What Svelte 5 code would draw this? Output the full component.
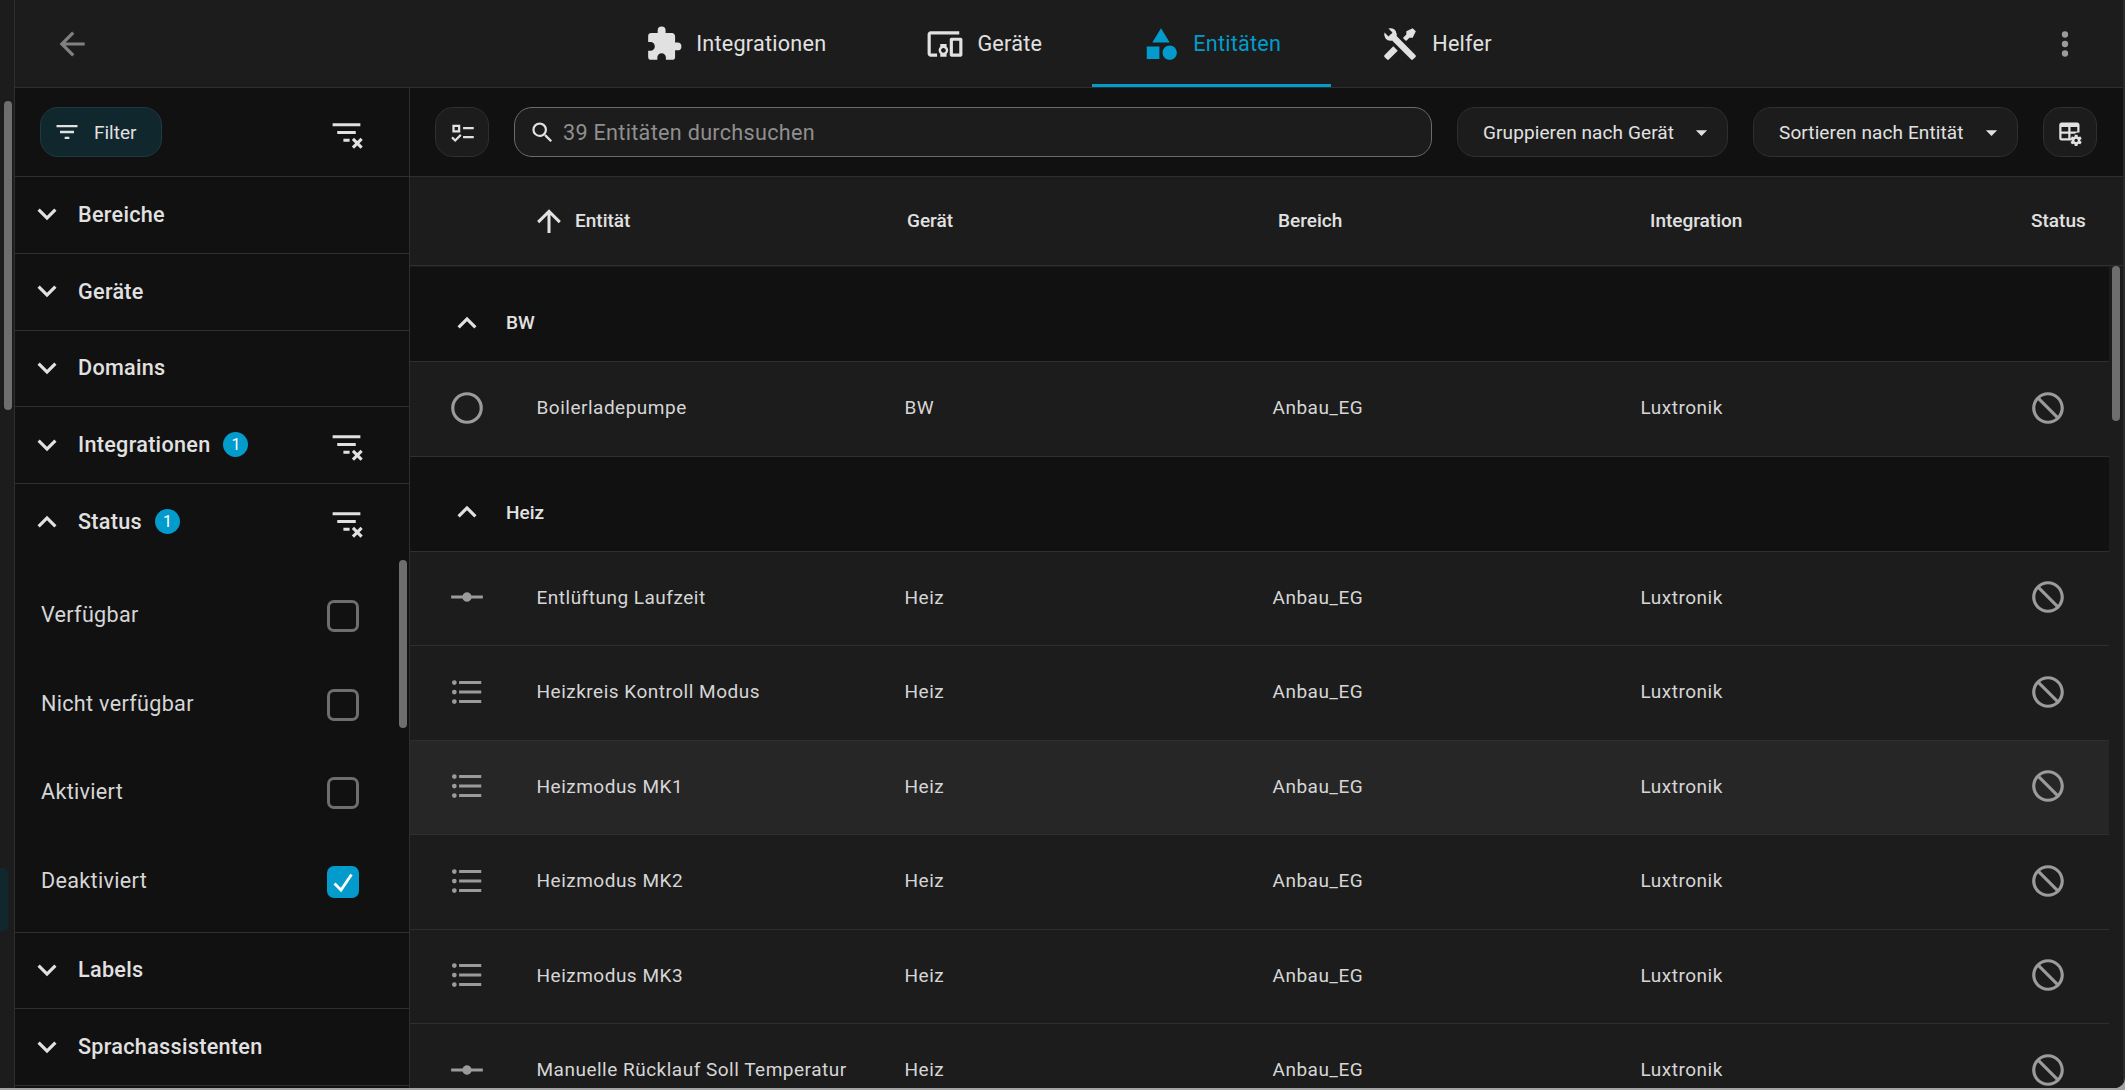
<script lang="ts">
  const P = {
    back: 'M20,11V13H8L13.5,18.5L12.08,19.92L4.16,12L12.08,4.08L13.5,5.5L8,11H20Z',
    puzzle: 'M20.5,11H19V7C19,5.89 18.1,5 17,5H13V3.5A2.5,2.5 0 0,0 10.5,1A2.5,2.5 0 0,0 8,3.5V5H4A2,2 0 0,0 2,7V10.8H3.5C5,10.8 6.2,12 6.2,13.5C6.2,15 5,16.2 3.5,16.2H2V20A2,2 0 0,0 4,22H7.8V20.5C7.8,19 9,17.8 10.5,17.8C12,17.8 13.2,19 13.2,20.5V22H17A2,2 0 0,0 19,20V16H20.5A2.5,2.5 0 0,0 23,13.5A2.5,2.5 0 0,0 20.5,11Z',
    devices: 'M3 6H21V4H3C1.9 4 1 4.9 1 6V18C1 19.1 1.9 20 3 20H7V18H3V6M13 12H9V13.78C8.39 14.33 8 15.11 8 16C8 16.89 8.39 17.67 9 18.22V20H13V18.22C13.61 17.67 14 16.88 14 16S13.61 14.33 13 13.78V12M11 17.5C10.17 17.5 9.5 16.83 9.5 16S10.17 14.5 11 14.5 12.5 15.17 12.5 16 11.83 17.5 11 17.5M22 8H16C15.5 8 15 8.5 15 9V19C15 19.5 15.5 20 16 20H22C22.5 20 23 19.5 23 19V9C23 8.5 22.5 8 22 8M21 18H17V10H21V18Z',
    shape: 'M11,13.5V21.5H3V13.5H11M12,2L17.5,11H6.5L12,2M17.5,13C20,13 22,15 22,17.5C22,20 20,22 17.5,22C15,22 13,20 13,17.5C13,15 15,13 17.5,13Z',
    tools: 'M21.71 20.29L20.29 21.71A1 1 0 0 1 18.88 21.71L7 9.85A3.81 3.81 0 0 1 6 10A4 4 0 0 1 2.22 4.7L4.76 7.24L5.29 6.71L6.71 5.29L7.24 4.76L4.7 2.22A4 4 0 0 1 10 6A3.81 3.81 0 0 1 9.85 7L21.71 18.88A1 1 0 0 1 21.71 20.29M2.29 18.88A1 1 0 0 0 2.29 20.29L3.71 21.71A1 1 0 0 0 5.12 21.71L10.59 16.25L7.76 13.42M20 2L16 4V6L13.83 8.17L15.83 10.17L18 8H20L22 4Z',
    dots: 'M12,16A2,2 0 0,1 14,18A2,2 0 0,1 12,20A2,2 0 0,1 10,18A2,2 0 0,1 12,16M12,10A2,2 0 0,1 14,12A2,2 0 0,1 12,14A2,2 0 0,1 10,12A2,2 0 0,1 12,10M12,4A2,2 0 0,1 14,6A2,2 0 0,1 12,8A2,2 0 0,1 10,6A2,2 0 0,1 12,4Z',
    filter: 'M6,13H18V11H6M3,6V8H21V6M10,18H14V16H10V18Z',
    clear: 'M21 8H3V6H21V8M18 13H6V11H18V13M14 16H10V18H14V16M21.12 15.46L19 17.59L16.88 15.46L15.46 16.88L17.59 19L15.46 21.12L16.88 22.54L19 20.41L21.12 22.54L22.54 21.12L20.41 19L22.54 16.88Z',
    down: 'M7.41,8.58L12,13.17L16.59,8.58L18,10L12,16L6,10L7.41,8.58Z',
    up: 'M7.41,15.41L12,10.83L16.59,15.41L18,14L12,8L6,14L7.41,15.41Z',
    arrowUp: 'M13,20H11V8L5.5,13.5L4.08,12.08L12,4.16L19.92,12.08L18.5,13.5L13,8V20Z',
    search: 'M9.5,3A6.5,6.5 0 0,1 16,9.5C16,11.11 15.41,12.59 14.44,13.73L14.71,14H15.5L20.5,19L19,20.5L14,15.5V14.71L13.73,14.44C12.59,15.41 11.11,16 9.5,16A6.5,6.5 0 0,1 3,9.5A6.5,6.5 0 0,1 9.5,3M9.5,5C7,5 5,7 5,9.5C5,12 7,14 9.5,14C12,14 14,12 14,9.5C14,7 12,5 9.5,5Z',
    menuDown: 'M7,10L12,15L17,10H7Z',
    select: 'M3 5H10V12H3V5M5 7V10H8V7H5M12.5 7H22V9H12.5V7M12.5 15H22V17H12.5V15M2 17L3.4 15.6L5.5 17.7L9.8 13.4L11.2 14.8L5.5 20.5L2 17Z',
    tableCog: 'M4 3H18C19.11 3 20 3.9 20 5V12.08C18.45 11.82 16.92 12.18 15.68 13H12V17H13.08C12.97 17.68 12.97 18.35 13.08 19H4C2.9 19 2 18.11 2 17V5C2 3.9 2.9 3 4 3M4 7V11H10V7H4M12 7V11H18V7H12M4 13V17H10V13H4M18 14C18.14 14 18.26 14.09 18.28 14.22L18.47 15.5C18.76 15.63 19.03 15.8 19.28 16L20.5 15.5C20.63 15.5 20.76 15.5 20.83 15.63L21.83 17.36C21.89 17.47 21.87 17.6 21.77 17.68L20.71 18.5C20.75 18.83 20.75 19.17 20.71 19.5L21.77 20.32C21.87 20.4 21.89 20.53 21.83 20.64L20.83 22.37C20.76 22.5 20.63 22.5 20.5 22.5L19.28 22C19.03 22.2 18.76 22.37 18.47 22.5L18.28 23.78C18.26 23.91 18.14 24 18 24H16C15.86 24 15.74 23.91 15.72 23.78L15.53 22.5C15.24 22.37 14.97 22.2 14.72 22L13.5 22.5C13.37 22.5 13.24 22.5 13.17 22.37L12.17 20.64C12.11 20.53 12.13 20.4 12.23 20.32L13.29 19.5C13.25 19.17 13.25 18.83 13.29 18.5L12.23 17.68C12.13 17.6 12.11 17.47 12.17 17.36L13.17 15.63C13.24 15.5 13.37 15.5 13.5 15.5L14.72 16C14.97 15.8 15.24 15.63 15.53 15.5L15.72 14.22C15.74 14.09 15.86 14 16 14H18M17 17.5A1.5 1.5 0 0 0 15.5 19A1.5 1.5 0 0 0 17 20.5A1.5 1.5 0 0 0 18.5 19A1.5 1.5 0 0 0 17 17.5Z',
    circle: 'M12,20A8,8 0 0,1 4,12A8,8 0 0,1 12,4A8,8 0 0,1 20,12A8,8 0 0,1 12,20M12,2A10,10 0 0,0 2,12A10,10 0 0,0 12,22A10,10 0 0,0 22,12A10,10 0 0,0 12,2Z',
    vertex: 'M2 11H9.17C9.58 9.83 10.69 9 12 9S14.42 9.83 14.83 11H22V13H14.83C14.42 14.17 13.31 15 12 15S9.58 14.17 9.17 13H2V11Z',
    list: 'M7,5H21V7H7V5M7,13V11H21V13H7M4,4.5A1.5,1.5 0 0,1 5.5,6A1.5,1.5 0 0,1 4,7.5A1.5,1.5 0 0,1 2.5,6A1.5,1.5 0 0,1 4,4.5M4,10.5A1.5,1.5 0 0,1 5.5,12A1.5,1.5 0 0,1 4,13.5A1.5,1.5 0 0,1 2.5,12A1.5,1.5 0 0,1 4,10.5M7,19V17H21V19H7M4,16.5A1.5,1.5 0 0,1 5.5,18A1.5,1.5 0 0,1 4,19.5A1.5,1.5 0 0,1 2.5,18A1.5,1.5 0 0,1 4,16.5Z',
    cancel: 'M12 2C17.5 2 22 6.5 22 12S17.5 22 12 22 2 17.5 2 12 6.5 2 12 2M12 4C10.1 4 8.4 4.6 7.1 5.7L18.3 16.9C19.3 15.5 20 13.8 20 12C20 7.6 16.4 4 12 4M16.9 18.3L5.7 7.1C4.6 8.4 4 10.1 4 12C4 16.4 7.6 20 12 20C13.9 20 15.6 19.4 16.9 18.3Z',
  };

  const tabs = [
    { label: 'Integrationen', icon: P.puzzle },
    { label: 'Geräte', icon: P.devices },
    { label: 'Entitäten', icon: P.shape, active: true },
    { label: 'Helfer', icon: P.tools },
  ];

  const statusOptions = [
    { label: 'Verfügbar', checked: false },
    { label: 'Nicht verfügbar', checked: false },
    { label: 'Aktiviert', checked: false },
    { label: 'Deaktiviert', checked: true },
  ];

  const groups = [
    { name: 'BW', rows: [{ name: 'Boilerladepumpe', icon: P.circle }] },
    {
      name: 'Heiz',
      rows: [
        { name: 'Entlüftung Laufzeit', icon: P.vertex },
        { name: 'Heizkreis Kontroll Modus', icon: P.list },
        { name: 'Heizmodus MK1', icon: P.list, hover: true },
        { name: 'Heizmodus MK2', icon: P.list },
        { name: 'Heizmodus MK3', icon: P.list },
        { name: 'Manuelle Rücklauf Soll Temperatur', icon: P.vertex },
      ],
    },
  ];
</script>

{#snippet icon(d: string, cls = '')}
  <svg class="icon {cls}" viewBox="0 0 24 24" aria-hidden="true"><path {d} /></svg>
{/snippet}

{#snippet section(title: string, open = false, count = 0)}
  <div class="section-head">
    {@render icon(open ? P.up : P.down)}
    <span class="section-title">{title}</span>
    {#if count}<span class="badge">{count}</span>{/if}
    {#if count}{@render icon(P.clear, 'clear')}{/if}
  </div>
{/snippet}

<div class="page">
  <aside class="rail">
    <div class="rail-thumb"></div>
    <div class="rail-active"></div>
  </aside>

  <div class="main">
    <header class="topbar">
      <div class="back">{@render icon(P.back)}</div>
      <nav class="tabs">
        {#each tabs as tab}
          <div class="tab" class:active={tab.active}>
            {@render icon(tab.icon)}
            <span>{tab.label}</span>
          </div>
        {/each}
      </nav>
      <div class="more">{@render icon(P.dots)}</div>
    </header>

    <div class="content">
      <section class="pane">
        <div class="filter-top">
          <div class="filter-btn">{@render icon(P.filter)}<span>Filter</span></div>
          {@render icon(P.clear, 'clear')}
        </div>
        {@render section('Bereiche')}
        {@render section('Geräte')}
        {@render section('Domains')}
        {@render section('Integrationen', false, 1)}
        <div class="status-block">
          {@render section('Status', true, 1)}
          <div class="options">
            {#each statusOptions as opt}
              <div class="option">
                <span>{opt.label}</span>
                <span class="box" class:checked={opt.checked}>
                  {#if opt.checked}
                    <svg viewBox="0 0 32 32"><path d="M7.5 17.5L14 24L24.5 8.5" /></svg>
                  {/if}
                </span>
              </div>
            {/each}
          </div>
          <div class="pane-thumb"></div>
        </div>
        {@render section('Labels')}
        {@render section('Sprachassistenten')}
      </section>

      <section class="data">
        <div class="toolbar">
          <div class="square-btn">{@render icon(P.select)}</div>
          <div class="search">{@render icon(P.search)}<span>39 Entitäten durchsuchen</span></div>
          <div class="menu-btn group-by"><span>Gruppieren nach Gerät</span>{@render icon(P.menuDown)}</div>
          <div class="menu-btn sort-by"><span>Sortieren nach Entität</span>{@render icon(P.menuDown)}</div>
          <div class="square-btn">{@render icon(P.tableCog)}</div>
        </div>

        <div class="table-head">
          <div class="th-name">{@render icon(P.arrowUp)}<span>Entität</span></div>
          <span>Gerät</span>
          <span>Bereich</span>
          <span>Integration</span>
          <span>Status</span>
        </div>

        <div class="table-body">
          <div class="table-thumb"></div>
          {#each groups as group}
            <div class="group">
              {@render icon(P.up)}
              <span>{group.name}</span>
            </div>
            {#each group.rows as row}
              <div class="row" class:hover={row.hover}>
                {@render icon(row.icon, 'state')}
                <span class="name">{row.name}</span>
                <span>{group.name}</span>
                <span>Anbau_EG</span>
                <span>Luxtronik</span>
                {@render icon(P.cancel, 'state')}
              </div>
            {/each}
          {/each}
        </div>
      </section>
    </div>
  </div>
</div>

<style>
  :global(body) {
    background: #a3a3a3;
    overflow: hidden;
  }

  .page {
    display: flex;
    height: 1088px;
    box-sizing: border-box;
    overflow: hidden;
    border-right: 2px solid #2b2b2b;
    border-radius: 0 0 10px 0;
    font-family: Roboto, 'Liberation Sans', sans-serif;
    color: #e1e1e1;
    background: #1c1c1c;
  }

  .icon {
    display: block;
    flex: none;
    width: 38px;
    height: 38px;
    fill: currentColor;
  }

  .rail {
    position: relative;
    flex: none;
    width: 14px;
    border-right: 1px solid #2f2f2f;
  }

  .rail-thumb {
    position: absolute;
    left: 4px;
    top: 101px;
    width: 8px;
    height: 309px;
    border-radius: 4px;
    background: #6e6e6e;
  }

  .rail-active {
    position: absolute;
    left: 0;
    top: 868px;
    width: 8px;
    height: 63px;
    border-radius: 0 5px 5px 0;
    background: #10272e;
  }

  .main {
    flex: 1;
    min-width: 0;
    display: flex;
    flex-direction: column;
  }

  .topbar {
    flex: none;
    height: 88px;
    box-sizing: border-box;
    display: flex;
    align-items: center;
    justify-content: space-between;
    padding: 0 39px 0 38px;
    border-bottom: 1px solid #2f2f2f;
  }

  .back {
    color: #808080;
  }

  .more {
    color: #9b9b9b;
  }

  .tabs {
    display: flex;
  }

  .tab {
    display: flex;
    align-items: center;
    gap: 13px;
    padding: 0 50px;
    height: 87px;
    box-sizing: border-box;
    font-size: 21.6px;
    letter-spacing: 0.25px;
    color: #e1e1e1;
  }

  .tab.active {
    color: #039bcb;
    box-shadow: inset 0 -3px 0 #039bcb;
  }

  .content {
    flex: 1;
    min-height: 0;
    display: flex;
    background: #111111;
  }

  .pane {
    flex: none;
    width: 394px;
    border-right: 1px solid #2f2f2f;
  }

  .filter-top {
    height: 89px;
    box-sizing: border-box;
    display: flex;
    align-items: center;
    justify-content: space-between;
    padding: 0 44px 0 25px;
    border-bottom: 1px solid #2f2f2f;
  }

  .filter-btn {
    display: flex;
    align-items: center;
    gap: 13px;
    width: 122px;
    height: 50px;
    box-sizing: border-box;
    padding-left: 12px;
    border: 1px solid #1f3a43;
    border-radius: 18px;
    background: #10272e;
    font-size: 19px;
    color: #e1e1e1;
  }

  .filter-btn .icon {
    width: 28px;
    height: 28px;
  }

  .section-head {
    height: 76.8px;
    box-sizing: border-box;
    display: flex;
    align-items: center;
    padding: 0 44px 1px 13px;
    border-bottom: 1px solid #2f2f2f;
  }

  .section-title {
    margin-left: 12px;
    font-size: 21.6px;
    font-weight: 500;
    letter-spacing: 0.3px;
  }

  .badge {
    width: 25px;
    height: 25px;
    margin-left: 13px;
    border-radius: 50%;
    background: #039bcb;
    color: #fff;
    font-size: 16px;
    line-height: 25px;
    text-align: center;
  }

  .icon.clear {
    width: 37px;
    height: 37px;
    margin-left: auto;
  }

  .status-block {
    position: relative;
    border-bottom: 1px solid #2f2f2f;
  }

  .status-block .section-head {
    height: 76px;
    border-bottom: none;
  }

  .options {
    padding: 10px 0 7px;
  }

  .option {
    height: 88.6px;
    display: flex;
    align-items: center;
    justify-content: space-between;
    padding: 0 50px 0 26px;
    font-size: 21.6px;
    letter-spacing: 0.3px;
    color: #d6d6d6;
  }

  .box {
    width: 32px;
    height: 32px;
    margin-top: 3px;
    box-sizing: border-box;
    border: 3px solid #6e6e6e;
    border-radius: 7px;
  }

  .box.checked {
    border: none;
    background: #039bcb;
  }

  .box svg {
    display: block;
    width: 32px;
    height: 32px;
    fill: none;
    stroke: #fff;
    stroke-width: 2.8;
  }

  .pane-thumb {
    position: absolute;
    right: 2px;
    top: 76px;
    width: 8px;
    height: 168px;
    border-radius: 4px;
    background: #6e6e6e;
  }

  .data {
    flex: 1;
    min-width: 0;
    display: flex;
    flex-direction: column;
  }

  .toolbar {
    flex: none;
    height: 89px;
    box-sizing: border-box;
    display: flex;
    align-items: center;
    gap: 25px;
    padding: 0 26px 0 25px;
    border-bottom: 1px solid #2f2f2f;
  }

  .square-btn {
    flex: none;
    width: 54px;
    height: 50px;
    box-sizing: border-box;
    display: grid;
    place-items: center;
    border: 1px solid #2f2f2f;
    border-radius: 18px;
    background: #1c1c1c;
    color: #e1e1e1;
  }

  .square-btn .icon {
    width: 27px;
    height: 27px;
  }

  .search {
    flex: 1;
    height: 50px;
    box-sizing: border-box;
    display: flex;
    align-items: center;
    gap: 7px;
    padding-left: 14px;
    border: 1px solid #6b6b6b;
    border-radius: 18px;
    background: #1c1c1c;
    font-size: 21.6px;
    letter-spacing: 0.3px;
    color: #8f8f8f;
  }

  .search .icon {
    width: 27px;
    height: 27px;
    color: #e1e1e1;
  }

  .menu-btn {
    flex: none;
    height: 50px;
    box-sizing: border-box;
    display: flex;
    align-items: center;
    justify-content: space-between;
    padding: 0 12px 0 25px;
    border: 1px solid #2f2f2f;
    border-radius: 18px;
    background: #1c1c1c;
    font-size: 19px;
    letter-spacing: 0.1px;
    color: #e1e1e1;
  }

  .group-by {
    width: 271px;
  }

  .sort-by {
    width: 265px;
  }

  .menu-btn .icon {
    width: 27px;
    height: 27px;
  }

  .table-head {
    flex: none;
    height: 89px;
    box-sizing: border-box;
    display: grid;
    grid-template-columns: 376px 371px 372px 381px 1fr;
    align-items: center;
    padding: 0 0 1px 121px;
    background: #1c1c1c;
    border-bottom: 1px solid #2f2f2f;
    font-size: 19px;
    font-weight: 500;
  }

  .th-name {
    display: flex;
    align-items: center;
    gap: 8px;
  }

  .th-name .icon {
    width: 36px;
    height: 36px;
  }

  .table-body {
    position: relative;
    flex: 1;
    min-height: 0;
    overflow: hidden;
    padding: 1px 14px 0 0;
    background: #1c1c1c;
  }

  .table-thumb {
    position: absolute;
    right: 3px;
    top: 0;
    width: 8px;
    height: 155px;
    border-radius: 4px;
    background: #6e6e6e;
  }

  .group {
    height: 95px;
    box-sizing: border-box;
    display: flex;
    align-items: center;
    gap: 20px;
    padding: 17px 0 0 38px;
    background: #111111;
    font-size: 19px;
    font-weight: 500;
    border-bottom: 1px solid #2f2f2f;
  }

  .row {
    height: 94.5px;
    box-sizing: border-box;
    display: grid;
    grid-template-columns: 126.5px 368px 368px 368px 388px 1fr;
    align-items: center;
    padding-bottom: 2px;
    background: #1c1c1c;
    border-bottom: 1px solid #2f2f2f;
    font-size: 19px;
    color: #d6d6d6;
    letter-spacing: 0.5px;
  }

  .row.hover {
    background: #262626;
  }

  .state {
    margin-left: 38px;
    color: #9b9b9b;
  }

  .row .state:last-child {
    margin-left: 0;
  }
</style>
